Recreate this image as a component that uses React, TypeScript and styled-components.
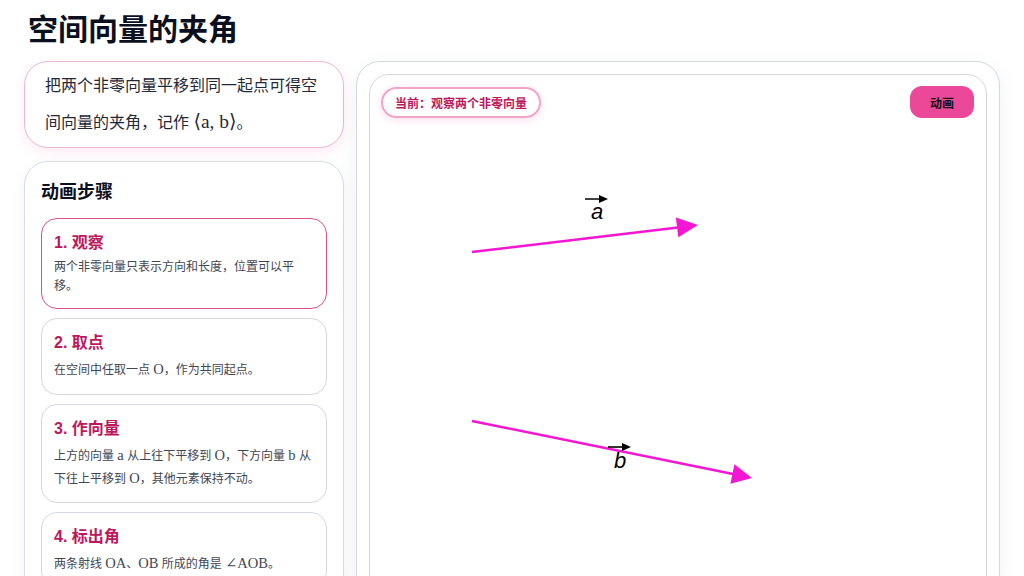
import React from 'react';
import styled, { createGlobalStyle } from 'styled-components';

const GlobalStyle = createGlobalStyle`
  html, body {
    margin: 0;
    padding: 0;
    background: #ffffff;
    font-family: "Liberation Sans", "Noto Sans CJK SC", sans-serif;
    color: #0f172a;
  }
  * {
    box-sizing: border-box;
  }
`;

const Page = styled.div`
  padding: 8px 24px 0;
  height: 576px;
  overflow: hidden;
`;

const Title = styled.h1`
  margin: 0 0 9px;
  padding-left: 4px;
  font-size: 30px;
  line-height: 44px;
  font-weight: 700;
  color: #0b1020;
`;

const Layout = styled.div`
  display: grid;
  grid-template-columns: 320px 1fr;
  gap: 12px;
  align-items: start;
`;

const Column = styled.div`
  display: flex;
  flex-direction: column;
  gap: 13px;
`;

const Intro = styled.div`
  border: 1px solid #e9b8d5;
  border-radius: 24px;
  padding: 6px 20px;
  font-size: 16px;
  line-height: 36px;
  color: #1f2937;
  box-shadow: 0 4px 12px rgba(236, 72, 153, 0.12);
  background: #fff;
`;

const Math = styled.span`
  font-family: "Liberation Serif", "DejaVu Serif", serif;
  font-size: 1.21em;
`;

const StepsCard = styled.div`
  border: 1px solid #d9dce7;
  border-radius: 24px;
  padding: 16px;
  background: #fff;
  box-shadow: 0 4px 14px rgba(100, 116, 139, 0.08);
  display: flex;
  flex-direction: column;
  gap: 9px;
`;

const StepsHeading = styled.h2`
  margin: 0 0 3px;
  font-size: 18px;
  line-height: 28px;
  font-weight: 700;
  color: #0b1020;
`;

const Step = styled.div<{ $active?: boolean }>`
  border: 1px solid ${(p) => (p.$active ? '#d9528d' : '#d5d8e2')};
  border-radius: 16px;
  padding: 12px;
  background: #fff;
`;

const StepTitle = styled.div`
  font-size: 16px;
  line-height: 24px;
  font-weight: 700;
  color: #be185d;
`;

const StepDesc = styled.div`
  margin-top: 3px;
  font-size: 12px;
  line-height: 1.6;
  color: #3f4654;
`;

const Stage = styled.div`
  border: 1px solid #d6d9e3;
  border-radius: 24px;
  padding: 12px;
  height: 540px;
  background: #fff;
  box-shadow: 0 6px 18px rgba(100, 116, 139, 0.1);
`;

const Canvas = styled.div`
  border: 1px solid #d4d7e0;
  border-radius: 20px;
  height: 600px;
  display: flex;
  flex-direction: column;
  overflow: hidden;
`;

const Toolbar = styled.div`
  display: flex;
  align-items: center;
  justify-content: space-between;
  padding: 11px 12px 11px 11px;
`;

const Badge = styled.div`
  height: 31px;
  display: flex;
  align-items: center;
  padding: 0 12px;
  border: 2px solid #f3a5c9;
  border-radius: 999px;
  font-size: 12px;
  font-weight: 700;
  color: #be185d;
  background: #fff;
  box-shadow: 0 2px 8px rgba(236, 72, 153, 0.18);
`;

const PlayButton = styled.button`
  height: 32px;
  padding: 0 20px;
  border: none;
  border-radius: 12px;
  background: #ec4899;
  color: #111;
  font-family: inherit;
  font-size: 12px;
  font-weight: 700;
  cursor: pointer;
`;

const Drawing = styled.svg`
  display: block;
  width: 100%;
  flex: 1;
`;

const VEC = '#f516d4';

type VecLabelProps = { x: number; y: number; arrowY: number; letter: string };

const VecLabel = ({ x, y, arrowY, letter }: VecLabelProps) => (
  <g>
    <line x1={x - 12} y1={arrowY} x2={x + 4} y2={arrowY} stroke="#000" strokeWidth={1.6} />
    <polygon points={`${x + 11},${arrowY} ${x + 2},${arrowY - 4} ${x + 2},${arrowY + 4}`} fill="#000" />
    <text
      x={x}
      y={y}
      textAnchor="middle"
      fontFamily='"Liberation Sans", Arial, sans-serif'
      fontStyle="italic"
      fontSize={22}
      fill="#000"
    >
      {letter}
    </text>
  </g>
);

const steps = [
  {
    title: '1. 观察',
    desc: <>两个非零向量只表示方向和长度，位置可以平移。</>,
  },
  {
    title: '2. 取点',
    desc: (
      <>
        在空间中任取一点 <Math>O</Math>，作为共同起点。
      </>
    ),
  },
  {
    title: '3. 作向量',
    desc: (
      <>
        上方的向量 <Math>a</Math> 从上往下平移到 <Math>O</Math>，下方向量 <Math>b</Math> 从下往上平移到{' '}
        <Math>O</Math>，其他元素保持不动。
      </>
    ),
  },
  {
    title: '4. 标出角',
    desc: (
      <>
        两条射线 <Math>OA</Math>、<Math>OB</Math> 所成的角是 <Math>∠AOB</Math>。
      </>
    ),
  },
];

export default function App() {
  return (
    <>
      <GlobalStyle />
      <Page>
        <Title>空间向量的夹角</Title>
        <Layout>
          <Column>
            <Intro>
              把两个非零向量平移到同一起点可得空间向量的夹角，记作 <Math>⟨a, b⟩</Math>。
            </Intro>
            <StepsCard>
              <StepsHeading>动画步骤</StepsHeading>
              {steps.map((s, i) => (
                <Step key={s.title} $active={i === 0}>
                  <StepTitle>{s.title}</StepTitle>
                  <StepDesc>{s.desc}</StepDesc>
                </Step>
              ))}
            </StepsCard>
          </Column>
          <Stage>
            <Canvas>
              <Toolbar>
                <Badge>当前：观察两个非零向量</Badge>
                <PlayButton>动画</PlayButton>
              </Toolbar>
              <Drawing viewBox="0 0 616 470" preserveAspectRatio="xMinYMin meet">
                <line x1={102} y1={123} x2={308} y2={98.4} stroke={VEC} strokeWidth={2.5} />
                <polygon points="328,96 308.3,108.3 305.9,88.5" fill={VEC} />
                <VecLabel x={227} y={90} arrowY={70} letter="a" />

                <line x1={102} y1={292} x2={363} y2={345} stroke={VEC} strokeWidth={2.5} />
                <polygon points="382,349 360.4,354.8 364.4,335.2" fill={VEC} />
                <VecLabel x={250} y={339} arrowY={318} letter="b" />
              </Drawing>
            </Canvas>
          </Stage>
        </Layout>
      </Page>
    </>
  );
}
